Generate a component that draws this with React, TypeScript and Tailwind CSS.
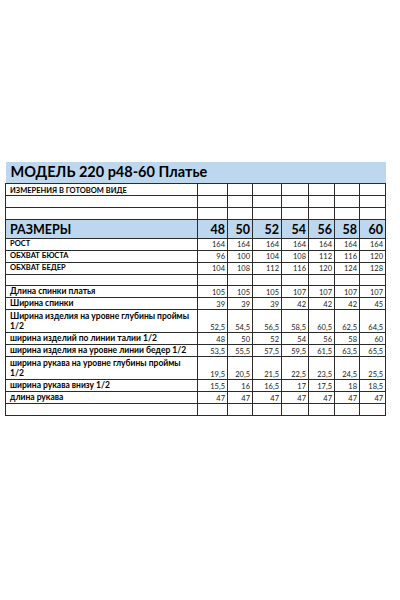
const sizes = ['48', '50', '52', '54', '56', '58', '60'];

type Row = {
  label: React.ReactNode;
  values?: string[];
  caps?: boolean;
  tall?: boolean;
};

const rows: Row[] = [
  { label: 'РОСТ', caps: true, values: ['164', '164', '164', '164', '164', '164', '164'] },
  { label: 'ОБХВАТ БЮСТА', caps: true, values: ['96', '100', '104', '108', '112', '116', '120'] },
  { label: 'ОБХВАТ БЕДЕР', caps: true, values: ['104', '108', '112', '116', '120', '124', '128'] },
  { label: '' },
  { label: 'Длина спинки платья', values: ['105', '105', '105', '107', '107', '107', '107'] },
  { label: 'Ширина спинки', values: ['39', '39', '39', '42', '42', '42', '45'] },
  {
    label: (
      <>
        Ширина изделия на уровне глубины проймы
        <br />
        1/2
      </>
    ),
    tall: true,
    values: ['52,5', '54,5', '56,5', '58,5', '60,5', '62,5', '64,5'],
  },
  { label: 'ширина изделий по линии талии 1/2', values: ['48', '50', '52', '54', '56', '58', '60'] },
  { label: 'ширина изделия на уровне линии бедер 1/2', values: ['53,5', '55,5', '57,5', '59,5', '61,5', '63,5', '65,5'] },
  {
    label: (
      <>
        ширина рукава на уровне глубины проймы
        <br />
        1/2
      </>
    ),
    tall: true,
    values: ['19,5', '20,5', '21,5', '22,5', '23,5', '24,5', '25,5'],
  },
  { label: 'ширина рукава внизу 1/2', values: ['15,5', '16', '16,5', '17', '17,5', '18', '18,5'] },
  { label: 'длина рукава', values: ['47', '47', '47', '47', '47', '47', '47'] },
  { label: '' },
];

const cell = 'border border-[#2b2b2b] align-bottom p-0';

function EmptyCells() {
  return (
    <>
      {sizes.map((s) => (
        <td key={s} className={cell}></td>
      ))}
    </>
  );
}

export default function App() {
  return (
    <div className="w-[400px] h-[600px] bg-white pt-[162px] pl-[5px] text-black" style={{ fontFamily: 'Lato, "Open Sans", sans-serif' }}>
      <table className="table-fixed border-collapse w-[380px]">
        <colgroup>
          <col className="w-[192px]" />
          <col className="w-[30px]" />
          <col className="w-[25px]" />
          <col className="w-[29px]" />
          <col className="w-[27px]" />
          <col className="w-[26px]" />
          <col className="w-[25px]" />
          <col className="w-[26px]" />
        </colgroup>
        <tbody>
          <tr className="h-[21px] bg-[#bdd7ee]">
            <td colSpan={8} className="p-0 pl-[5px] align-middle border-b border-[#2b2b2b] text-[14.5px] font-bold leading-none whitespace-nowrap">
              МОДЕЛЬ 220 р48-60 Платье
            </td>
          </tr>
          <tr className="h-[12px]">
            <td className={`${cell} pl-[4px] text-[7.5px] font-bold leading-none whitespace-nowrap`}>ИЗМЕРЕНИЯ В ГОТОВОМ ВИДЕ</td>
            <EmptyCells />
          </tr>
          <tr className="h-[12px]">
            <td className={cell}></td>
            <EmptyCells />
          </tr>
          <tr className="h-[12px]">
            <td className={cell}></td>
            <EmptyCells />
          </tr>
          <tr className="h-[19px] bg-[#bdd7ee]">
            <td className={`${cell} pl-[4px] text-[12.5px] font-bold leading-none pb-[1px]`}>РАЗМЕРЫ</td>
            {sizes.map((s) => (
              <td key={s} className={`${cell} text-right pr-[2px] text-[12.5px] font-bold leading-none pb-[1px]`}>
                {s}
              </td>
            ))}
          </tr>
          {rows.map((r, i) => (
            <tr key={i} className={r.tall ? 'h-[23px]' : 'h-[11.6px]'}>
              <td
                className={`${cell} pl-[4px] pb-[1px] leading-[10px] font-bold whitespace-nowrap ${
                  r.caps ? 'text-[7.5px]' : 'text-[8.5px]'
                }`}
              >
                {r.label}
              </td>
              {sizes.map((s, j) => (
                <td key={s} className={`${cell} text-right pr-[2px] pb-[1px] text-[7.5px] leading-none text-[#222]`}>
                  {r.values ? r.values[j] : ''}
                </td>
              ))}
            </tr>
          ))}
        </tbody>
      </table>
    </div>
  );
}
